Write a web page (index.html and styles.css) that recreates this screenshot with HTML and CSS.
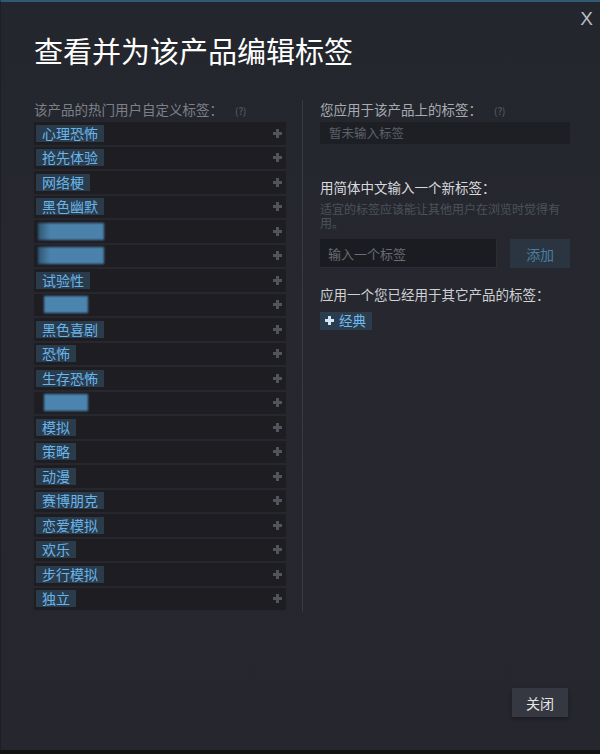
FILE: index.html
```html
<!DOCTYPE html>
<html lang="zh-CN">
<head>
  <meta charset="UTF-8" />
  <meta name="viewport" content="width=device-width, initial-scale=1.0"/>
  <title>查看并为该产品编辑标签</title>
  <link rel="stylesheet" href="styles.css">
</head>
<body>
  <div class="modal">
    <!-- Close -->
    <div class="close-x">X</div>

    <h1 class="title">查看并为该产品编辑标签</h1>

    <div class="columns">
      <!-- Popular tags -->
      <div class="col-left">
        <div class="label">该产品的热门用户自定义标签：<span class="hint">(?)</span></div>
        <div class="tag-list">
          <div class="tag-row"><span class="chip">心理恐怖</span><span class="plus"></span></div>
          <div class="tag-row"><span class="chip">抢先体验</span><span class="plus"></span></div>
          <div class="tag-row"><span class="chip">网络梗</span><span class="plus"></span></div>
          <div class="tag-row"><span class="chip">黑色幽默</span><span class="plus"></span></div>
          <div class="tag-row"><span class="chip blurred wide"></span><span class="plus"></span></div>
          <div class="tag-row"><span class="chip blurred wide"></span><span class="plus"></span></div>
          <div class="tag-row"><span class="chip">试验性</span><span class="plus"></span></div>
          <div class="tag-row"><span class="chip blurred"></span><span class="plus"></span></div>
          <div class="tag-row"><span class="chip">黑色喜剧</span><span class="plus"></span></div>
          <div class="tag-row"><span class="chip">恐怖</span><span class="plus"></span></div>
          <div class="tag-row"><span class="chip">生存恐怖</span><span class="plus"></span></div>
          <div class="tag-row"><span class="chip blurred"></span><span class="plus"></span></div>
          <div class="tag-row"><span class="chip">模拟</span><span class="plus"></span></div>
          <div class="tag-row"><span class="chip">策略</span><span class="plus"></span></div>
          <div class="tag-row"><span class="chip">动漫</span><span class="plus"></span></div>
          <div class="tag-row"><span class="chip">赛博朋克</span><span class="plus"></span></div>
          <div class="tag-row"><span class="chip">恋爱模拟</span><span class="plus"></span></div>
          <div class="tag-row"><span class="chip">欢乐</span><span class="plus"></span></div>
          <div class="tag-row"><span class="chip">步行模拟</span><span class="plus"></span></div>
          <div class="tag-row"><span class="chip">独立</span><span class="plus"></span></div>
        </div>
      </div>

      <div class="divider"></div>

      <!-- Your tags -->
      <div class="col-right">
        <div class="label light">您应用于该产品上的标签：<span class="hint">(?)</span></div>
        <div class="applied">暂未输入标签</div>

        <div class="heading">用简体中文输入一个新标签：</div>
        <p class="desc">适宜的标签应该能让其他用户在浏览时觉得有用。</p>
        <div class="add-row">
          <input class="tag-input" type="text" placeholder="输入一个标签">
          <button class="btn-add">添加</button>
        </div>

        <div class="heading second">应用一个您已经用于其它产品的标签：</div>
        <span class="chip own">
          <svg width="9" height="9" viewBox="0 0 9 9"><path d="M3 0h3v3h3v3H6v3H3V6H0V3h3z" fill="#cfe6f6"/></svg>
          经典
        </span>
      </div>
    </div>

    <div class="footer">
      <button class="btn-close">关闭</button>
    </div>
  </div>
</body>
</html>
```

FILE: styles.css
```css
* {
  box-sizing: border-box;
  margin: 0;
  padding: 0;
}

body {
  font-family: "Noto Sans CJK SC", "Noto Sans", sans-serif;
  background: #111;
  color: #c6c8cc;
  overflow: hidden;
}

.modal {
  position: relative;
  height: 750px;
  display: flex;
  flex-direction: column;
  padding: 30px 30px 0 33px;
  background: linear-gradient(180deg, #24262d 0%, #27282f 40%, #26262e 100%);
  border-top: 2px solid #2e5a76;
  border-left: 1px solid #1e1f25;
}

.close-x {
  position: absolute;
  top: 6px;
  right: 7px;
  font-family: "Liberation Sans", sans-serif;
  font-size: 19px;
  color: #b9bcc1;
}

.title {
  font-size: 29px;
  line-height: 36px;
  font-weight: normal;
  color: #ffffff;
  margin-bottom: 32px;
}

.columns {
  display: grid;
  grid-template-columns: 252px 1px 251px;
  column-gap: 16px;
}

.col-right {
  margin-left: 1px;
}

.divider {
  background: #383a42;
  height: 512px;
}

.label {
  font-size: 13.5px;
  line-height: 18px;
  color: #7b8089;
  margin-bottom: 2px;
}

.label.light {
  color: #a8acb2;
}

.hint {
  font-size: 10px;
  color: #5b616a;
  margin-left: 12px;
}

.tag-row {
  height: 22.5px;
  margin-bottom: 2px;
  background: #1d1d22;
  display: flex;
  align-items: center;
  justify-content: space-between;
  padding: 0 4px 0 2px;
}

.chip {
  display: inline-flex;
  align-items: center;
  height: 17px;
  padding: 0 6px;
  background: #2a3c4c;
  color: #69b5ea;
  font-size: 14px;
  line-height: 17px;
}

.chip.blurred {
  width: 44px;
  background: #4b84ae;
  filter: blur(1px);
  margin-left: 8px;
}

.chip.blurred.wide {
  width: 66px;
  margin-left: 2px;
  background: linear-gradient(90deg, #2f5571 0%, #4a82ab 18%, #4a82ab 100%);
}

.plus {
  width: 9px;
  height: 9px;
  background:
    linear-gradient(#50555d, #50555d) center / 9px 3px no-repeat,
    linear-gradient(#50555d, #50555d) center / 3px 9px no-repeat;
}

.applied {
  height: 22px;
  background: #1e1f25;
  padding-left: 9px;
  font-size: 12.5px;
  line-height: 22px;
  color: #5c6068;
  margin-bottom: 34px;
}

.heading {
  font-size: 13.5px;
  line-height: 18px;
  color: #d7d9dc;
  margin-bottom: 6px;
}

.heading.second {
  margin-top: 17px;
  margin-bottom: 3px;
  color: #cfd1d4;
}

.desc {
  font-size: 12px;
  line-height: 14px;
  color: #4c525c;
  width: 251px;
}

.add-row {
  display: flex;
  gap: 13px;
  margin-top: 9px;
  height: 29px;
}

.tag-input {
  width: 178px;
  height: 29px;
  background: #1b1c21;
  border: none;
  border-right: 1px solid #2c2d33;
  border-bottom: 1px solid #2c2d33;
  padding-left: 8px;
  font-family: inherit;
  font-size: 13px;
  color: #c6c8cc;
}

.tag-input::placeholder {
  color: #686c73;
}

.btn-add {
  width: 60px;
  height: 29px;
  border: none;
  background: #2a3541;
  color: #4b7f9f;
  font-family: inherit;
  font-size: 14px;
}

.chip.own {
  height: 18px;
  gap: 5px;
  padding: 0 6px 0 5px;
  background: #2b3d4d;
  color: #6fbaef;
  font-size: 13.5px;
}

.footer {
  margin-top: auto;
  display: flex;
  justify-content: flex-end;
  padding: 0 2px 33px 0;
}

.btn-close {
  width: 56px;
  height: 29px;
  border: none;
  background: #353841;
  color: #e6e6e6;
  font-family: inherit;
  font-size: 14px;
  box-shadow: 0 2px 4px rgba(0, 0, 0, 0.3);
}
```
